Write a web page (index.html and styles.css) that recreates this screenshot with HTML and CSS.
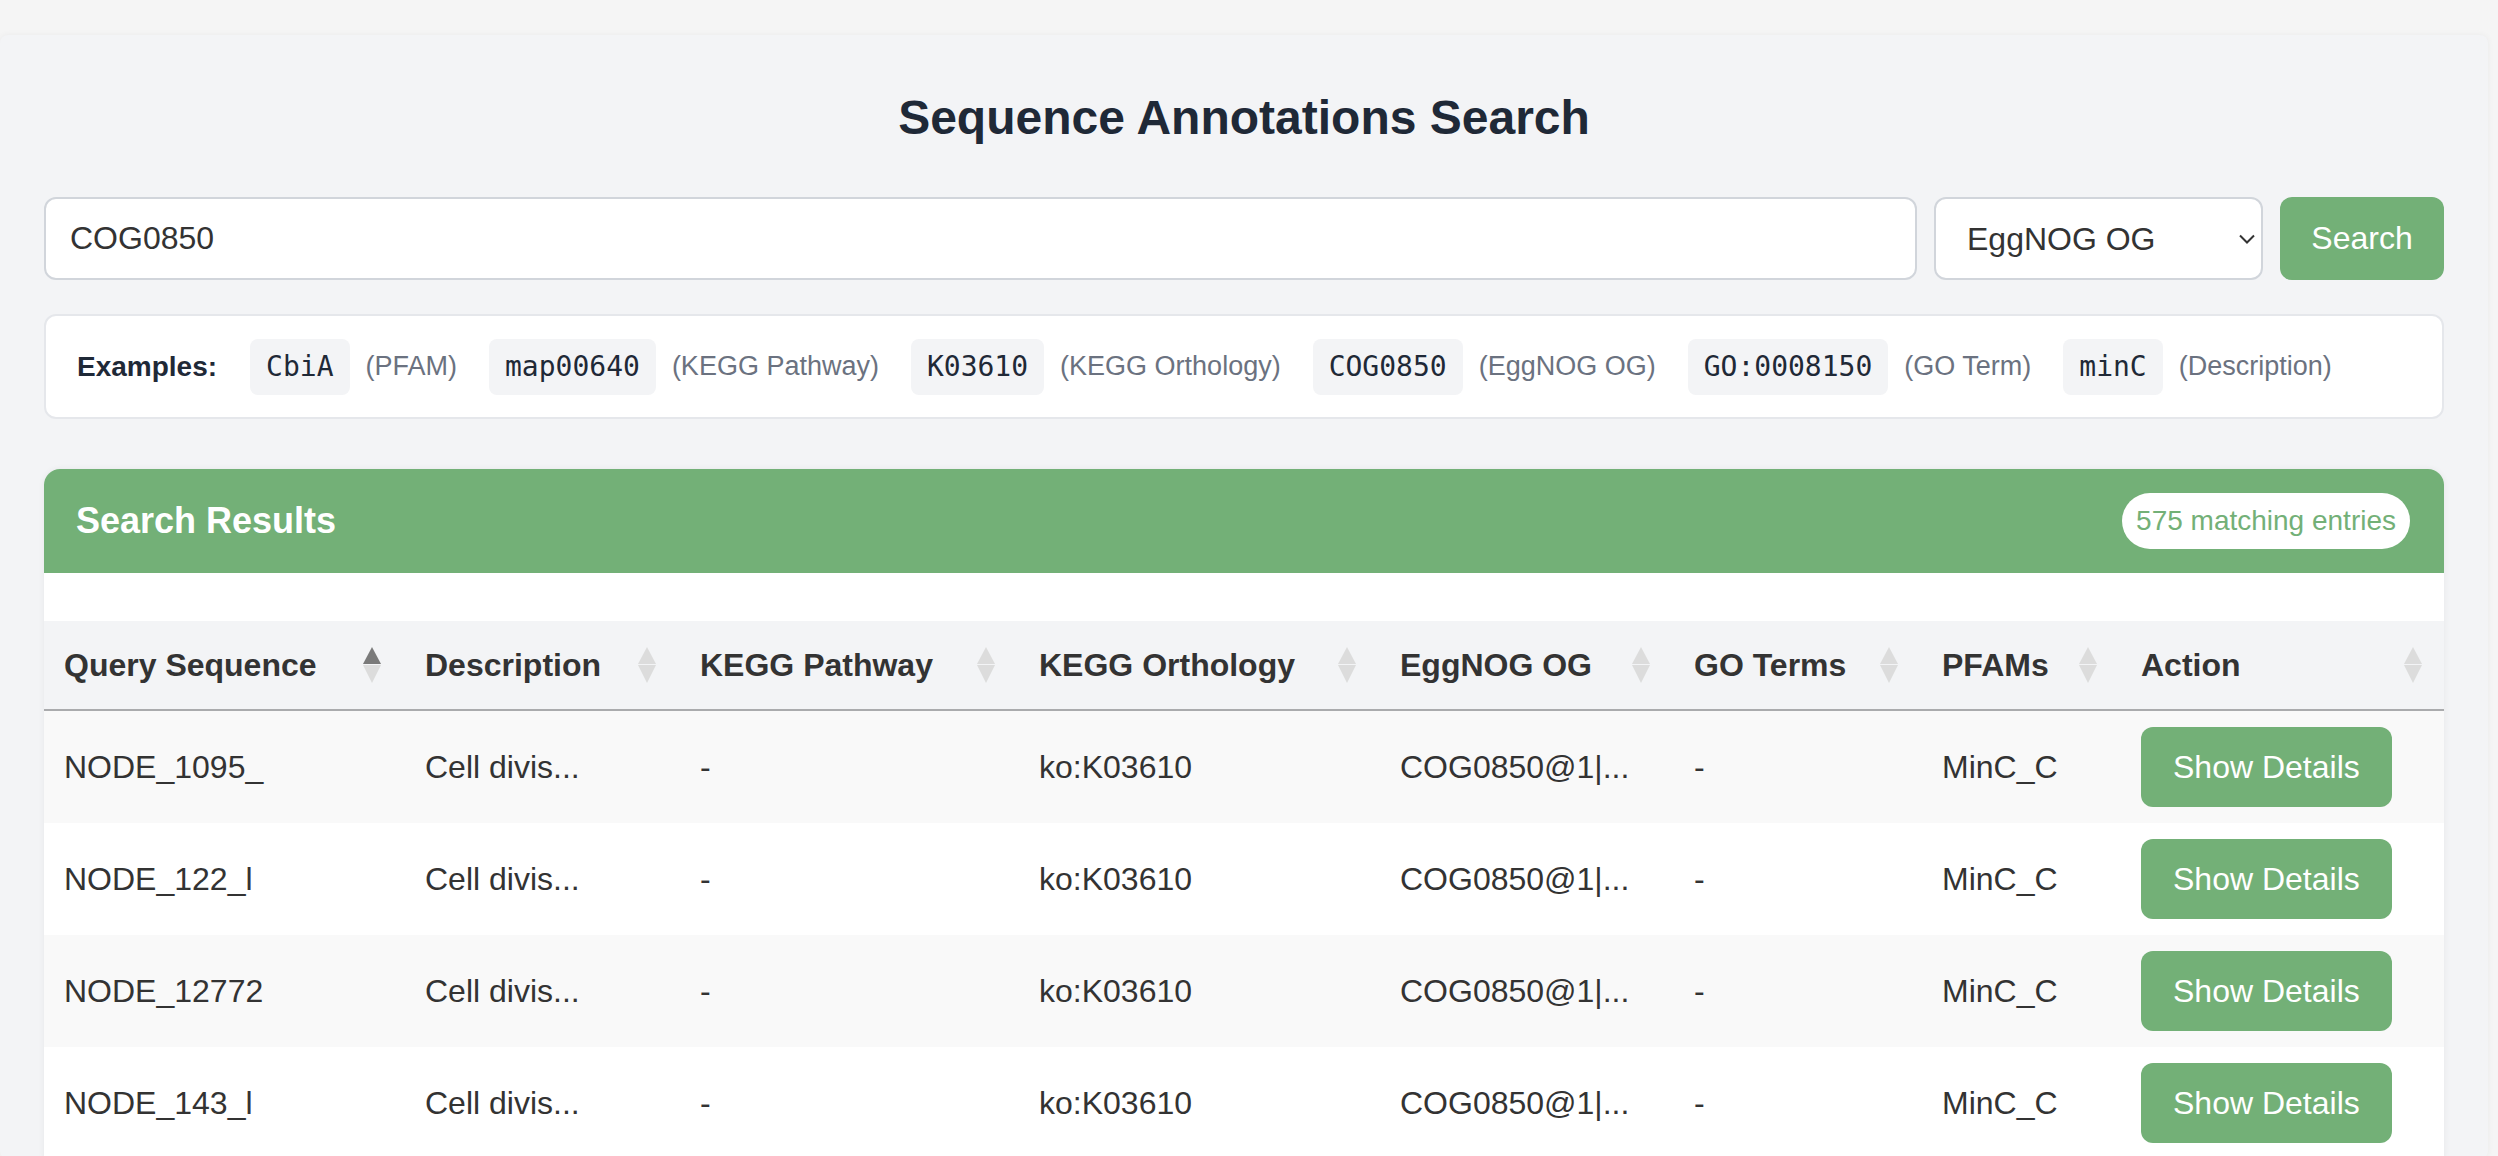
FILE: index.html
```html
<!DOCTYPE html>
<html lang="en">
<head>
    <meta charset="UTF-8">
    <meta name="viewport" content="width=device-width, initial-scale=1.0">
    <title>Sequence Annotations Search</title>
    <link rel="stylesheet" href="styles.css">
</head>
<body>

    <div class="container">
        <h1 class="page-title">Sequence Annotations Search</h1>

        <!-- Search bar -->
        <form class="search-bar" onsubmit="return false;">
            <input class="search-input" type="text" value="COG0850">
            <div class="select-wrap">
                <select class="search-type">
                    <option>PFAM</option>
                    <option>KEGG Pathway</option>
                    <option>KEGG Orthology</option>
                    <option selected>EggNOG OG</option>
                    <option>GO Term</option>
                    <option>Description</option>
                </select>
                <svg class="select-arrow" width="16" height="10" viewBox="0 0 16 10">
                    <path d="M1 1.5 L8 8.5 L15 1.5" fill="none" stroke="#333" stroke-width="2"/>
                </svg>
            </div>
            <button class="search-button" type="submit">Search</button>
        </form>

        <!-- Examples -->
        <div class="examples">
            <span class="examples-label">Examples:</span>
            <span class="example"><code>CbiA</code><span class="example-type">(PFAM)</span></span>
            <span class="example"><code>map00640</code><span class="example-type">(KEGG Pathway)</span></span>
            <span class="example"><code>K03610</code><span class="example-type">(KEGG Orthology)</span></span>
            <span class="example"><code>COG0850</code><span class="example-type">(EggNOG OG)</span></span>
            <span class="example"><code>GO:0008150</code><span class="example-type">(GO Term)</span></span>
            <span class="example"><code>minC</code><span class="example-type">(Description)</span></span>
        </div>

        <!-- Results -->
        <div class="results">
            <div class="results-header">
                <h2>Search Results</h2>
                <span class="badge">575 matching entries</span>
            </div>
            <div class="results-toolbar"></div>
            <table class="results-table">
                <colgroup>
                    <col style="width: 361px">
                    <col style="width: 275px">
                    <col style="width: 339px">
                    <col style="width: 361px">
                    <col style="width: 294px">
                    <col style="width: 248px">
                    <col style="width: 199px">
                    <col style="width: 325px">
                </colgroup>
                <thead>
                    <tr>
                        <th class="sorted-asc">Query Sequence<span class="sort-icon"></span></th>
                        <th>Description<span class="sort-icon"></span></th>
                        <th>KEGG Pathway<span class="sort-icon"></span></th>
                        <th>KEGG Orthology<span class="sort-icon"></span></th>
                        <th>EggNOG OG<span class="sort-icon"></span></th>
                        <th>GO Terms<span class="sort-icon"></span></th>
                        <th>PFAMs<span class="sort-icon"></span></th>
                        <th>Action<span class="sort-icon"></span></th>
                    </tr>
                </thead>
                <tbody>
                    <tr>
                        <td>NODE_1095_</td>
                        <td>Cell divis...</td>
                        <td>-</td>
                        <td>ko:K03610</td>
                        <td>COG0850@1|...</td>
                        <td>-</td>
                        <td>MinC_C</td>
                        <td><button class="details-button">Show Details</button></td>
                    </tr>
                    <tr>
                        <td>NODE_122_l</td>
                        <td>Cell divis...</td>
                        <td>-</td>
                        <td>ko:K03610</td>
                        <td>COG0850@1|...</td>
                        <td>-</td>
                        <td>MinC_C</td>
                        <td><button class="details-button">Show Details</button></td>
                    </tr>
                    <tr>
                        <td>NODE_12772</td>
                        <td>Cell divis...</td>
                        <td>-</td>
                        <td>ko:K03610</td>
                        <td>COG0850@1|...</td>
                        <td>-</td>
                        <td>MinC_C</td>
                        <td><button class="details-button">Show Details</button></td>
                    </tr>
                    <tr>
                        <td>NODE_143_l</td>
                        <td>Cell divis...</td>
                        <td>-</td>
                        <td>ko:K03610</td>
                        <td>COG0850@1|...</td>
                        <td>-</td>
                        <td>MinC_C</td>
                        <td><button class="details-button">Show Details</button></td>
                    </tr>
                </tbody>
            </table>
        </div>
    </div>

</body>
</html>
```

FILE: styles.css
```css
body {
    margin: 0;
    padding: 0;
    background-color: #f5f5f5;
    font-family: "Liberation Sans", Arial, sans-serif;
    color: #333;
    overflow: hidden;
}

.container {
    margin: 35px 10px 0 0;
    padding: 55px 44px 0 44px;
    background-color: #f3f4f6;
    border-radius: 8px;
    box-shadow: 0 0 6px rgba(0, 0, 0, 0.05);
}

.page-title {
    margin: 0 0 52px 0;
    text-align: center;
    font-size: 48px;
    font-weight: bold;
    color: #1f2937;
}

/* search bar */
.search-bar {
    display: flex;
    gap: 17px;
    height: 83px;
}

.search-input {
    flex: 1;
    box-sizing: border-box;
    height: 83px;
    padding: 0 24px;
    border: 2px solid #d1d5db;
    border-radius: 12px;
    background: white;
    font-family: inherit;
    font-size: 32px;
    color: #333;
    outline: none;
}

.select-wrap {
    position: relative;
    width: 329px;
}

.search-type {
    appearance: none;
    -webkit-appearance: none;
    box-sizing: border-box;
    width: 100%;
    height: 83px;
    padding: 0 0 0 31px;
    border: 2px solid #d1d5db;
    border-radius: 12px;
    background: white;
    font-family: inherit;
    font-size: 32px;
    color: #333;
}

.select-arrow {
    position: absolute;
    right: 8px;
    top: 37px;
    pointer-events: none;
}

.search-button {
    width: 164px;
    height: 83px;
    border: none;
    border-radius: 12px;
    background-color: #73b077;
    color: white;
    font-family: inherit;
    font-size: 32px;
    cursor: pointer;
}

/* examples */
.examples {
    display: flex;
    align-items: center;
    box-sizing: border-box;
    height: 105px;
    margin-top: 34px;
    padding: 0 31px;
    background: white;
    border: 2px solid #e5e7eb;
    border-radius: 12px;
    font-size: 28px;
}

.examples-label {
    font-weight: bold;
    color: #1f2937;
    margin-right: 33px;
}

.example {
    display: flex;
    align-items: center;
    margin-right: 32px;
}

.example code {
    display: inline-block;
    padding: 0 16px;
    line-height: 56px;
    background-color: #f3f4f6;
    border-radius: 8px;
    font-family: "DejaVu Sans Mono", "Liberation Mono", monospace;
    font-size: 28px;
    color: #1f2937;
}

.example-type {
    margin-left: 16px;
    font-size: 27px;
    color: #6b7280;
}

/* results */
.results {
    margin-top: 50px;
    background: white;
    border-radius: 16px 16px 0 0;
    overflow: hidden;
    box-shadow: 0 0 6px rgba(0, 0, 0, 0.06);
}

.results-header {
    display: flex;
    justify-content: space-between;
    align-items: center;
    height: 104px;
    padding: 0 34px 0 32px;
    background-color: #73b077;
}

.results-header h2 {
    margin: 0;
    font-size: 36px;
    color: white;
}

.badge {
    padding: 0 14px;
    line-height: 56px;
    background: white;
    border-radius: 28px;
    font-size: 28px;
    color: #73b077;
}

.results-toolbar {
    height: 48px;
}

.results-table {
    width: 100%;
    table-layout: fixed;
    border-collapse: collapse;
    font-size: 32px;
}

.results-table th {
    position: relative;
    height: 88px;
    padding: 0 20px;
    background-color: #f3f4f6;
    border-bottom: 2px solid #aaabad;
    text-align: left;
    font-weight: bold;
    white-space: nowrap;
}

.sort-icon {
    position: absolute;
    right: 24px;
    top: 26px;
    width: 18px;
    height: 36px;
}

.sort-icon::before,
.sort-icon::after {
    content: "";
    position: absolute;
    left: 0;
    border-left: 9px solid transparent;
    border-right: 9px solid transparent;
}

.sort-icon::before {
    top: 0;
    border-bottom: 17px solid #dcdcdc;
}

.sort-icon::after {
    top: 18px;
    border-top: 18px solid #dcdcdc;
}

.sorted-asc .sort-icon::before {
    border-bottom-color: #7a7a7a;
}

.results-table td {
    height: 80px;
    padding: 16px 20px;
    vertical-align: middle;
    white-space: nowrap;
    overflow: hidden;
}

.results-table tbody tr:nth-child(odd) {
    background-color: #f9f9f9;
}

.details-button {
    height: 80px;
    padding: 0 32px;
    border: none;
    border-radius: 12px;
    background-color: #73b077;
    color: white;
    font-family: inherit;
    font-size: 32px;
    cursor: pointer;
}
```
